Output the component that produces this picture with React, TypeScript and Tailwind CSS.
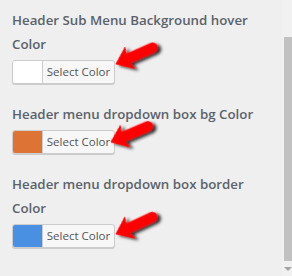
import React from "react";

type Field = {
  label: string;
  color: string;
};

const FIELDS: Field[] = [
  { label: "Header Sub Menu Background hover Color", color: "#ffffff" },
  { label: "Header menu dropdown box bg Color", color: "#dd7335" },
  { label: "Header menu dropdown box border Color", color: "#4a90e2" },
];

// tip position + rotation for each red annotation arrow
const ARROWS = [
  { x: 116, y: 64, r: -24 },
  { x: 111, y: 142, r: -23 },
  { x: 116, y: 234, r: -25 },
];

function ColorButton({ color }: { color: string }) {
  return (
    <button
      type="button"
      className="flex h-6 w-[103px] items-stretch overflow-hidden rounded-[3px] border border-[#cccccc] bg-[#f7f7f7] shadow-[0_1px_0_#cccccc]"
    >
      <span className="w-[30px] border-r border-[#cccccc]" style={{ backgroundColor: color }} />
      <span className="flex flex-1 items-center justify-center text-[11.5px] text-[#555555]">Select Color</span>
    </button>
  );
}

export default function App() {
  return (
    <div
      className="relative flex h-[276px] w-[292px] overflow-hidden bg-[#efefef]"
      style={{ fontFamily: '"Open Sans", "Noto Sans", sans-serif' }}
    >
      <div className="flex w-[262px] flex-col gap-[18px] pl-3 pt-2">
        {FIELDS.map((f) => (
          <div key={f.label} className="flex flex-col items-start">
            <span className="text-[13.3px] font-semibold leading-6 text-[#5b626b]">{f.label}</span>
            <div className="mt-1">
              <ColorButton color={f.color} />
            </div>
          </div>
        ))}
      </div>

      {/* fake scrollbar */}
      <div className="ml-auto flex w-[10px] flex-col bg-[#f1f1f1]">
        <div className="h-[37px]" />
        <div className="ml-[2px] h-[224px] bg-[#c1c1c1]" />
        <div className="flex flex-1 items-center justify-end">
          <span className="h-0 w-0 border-x-[4px] border-t-[4px] border-x-transparent border-t-[#a3a3a3]" />
        </div>
      </div>

      <svg className="pointer-events-none absolute inset-0" width="292" height="276">
        <defs>
          <filter id="sh" x="-30%" y="-30%" width="160%" height="160%">
            <feDropShadow dx="2.5" dy="3" stdDeviation="1.6" floodColor="#000" floodOpacity="0.8" />
          </filter>
        </defs>
        {ARROWS.map((a, i) => (
          <g key={i} transform={`translate(${a.x} ${a.y}) rotate(${a.r})`} filter="url(#sh)">
            <path
              d="M0,0 L15,-11.5 L13,-4.8 L40,-4.8 A4.8,4.8 0 0 1 40,4.8 L13,4.8 L15,11.5 Z"
              fill="#ff0000"
              stroke="#ff0000"
              strokeWidth="1"
              strokeLinejoin="round"
            />
          </g>
        ))}
      </svg>
    </div>
  );
}
